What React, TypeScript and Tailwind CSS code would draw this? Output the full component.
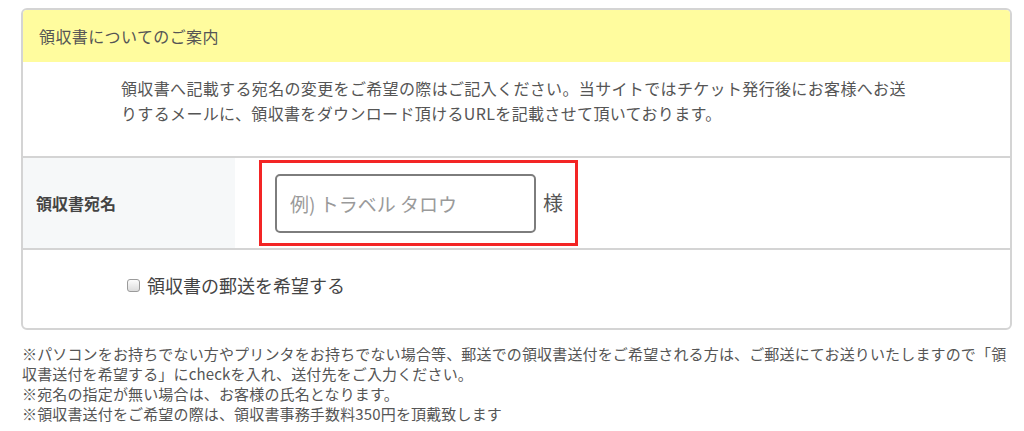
const jp = "font-['Noto_Sans_CJK_JP','Noto_Sans',sans-serif]";

// 領収書の案内カード
function ReceiptCard() {
  return (
    <div className="overflow-hidden rounded-[6px] border-2 border-[#d4d4d4] bg-white">
      <div className="flex h-[52px] items-center bg-[#fffc9e] px-[16px] text-[16px] tracking-[0.4px] text-[#555]">
        領収書についてのご案内
      </div>

      <div className="pb-[30px] pl-[98px] pt-[14px] text-[16px] leading-[25px] tracking-[0.35px] text-[#555]">
        <p className="whitespace-nowrap">
          領収書へ記載する宛名の変更をご希望の際はご記入ください。当サイトではチケット発行後にお客様へお送
        </p>
        <p className="whitespace-nowrap">
          りするメールに、領収書をダウンロード頂けるURLを記載させて頂いております。
        </p>
      </div>

      <div className="flex h-[94px] border-y-2 border-[#d4d4d4]">
        <div className="flex w-[212px] shrink-0 items-center bg-[#f6f8f9] pl-[13px] text-[16px] font-bold text-[#444]">
          領収書宛名
        </div>
        <div className="flex items-center pl-[24px]">
          <div className="flex h-[86px] w-[319px] items-center gap-[7px] border-[3px] border-[#f32525] pl-[13px]">
            <input
              type="text"
              placeholder="例) トラベル タロウ"
              className="h-[59px] w-[261px] rounded-[5px] border-2 border-[#7d7d7d] bg-white px-[13px] text-[19px] text-[#333] placeholder:text-[#9a9a9a]"
            />
            <span className="text-[20px] text-[#555]">様</span>
          </div>
        </div>
      </div>

      <div className="flex h-[78px] items-center pb-[7px] pl-[104px]">
        <label className="flex items-center gap-[7px] text-[18px] text-[#444]">
          <span className="h-[13px] w-[13px] rounded-[3px] border border-[#9b9b9b] bg-gradient-to-b from-[#fcfcfc] to-[#dcdcdc]" />
          領収書の郵送を希望する
        </label>
      </div>
    </div>
  );
}

export default function App() {
  return (
    <div className={`${jp} w-[1024px] bg-white pl-[21px] pr-[12px] pt-[8px]`}>
      <ReceiptCard />
      <div className="pl-[1px] pt-[14px] text-[15px] leading-[20px] tracking-[0.15px] text-[#555]">
        <p className="whitespace-nowrap">
          ※パソコンをお持ちでない方やプリンタをお持ちでない場合等、郵送での領収書送付をご希望される方は、ご郵送にてお送りいたしますので「領
        </p>
        <p className="whitespace-nowrap">収書送付を希望する」にcheckを入れ、送付先をご入力ください。</p>
        <p className="whitespace-nowrap">※宛名の指定が無い場合は、お客様の氏名となります。</p>
        <p className="whitespace-nowrap">※領収書送付をご希望の際は、領収書事務手数料350円を頂戴致します</p>
      </div>
    </div>
  );
}
